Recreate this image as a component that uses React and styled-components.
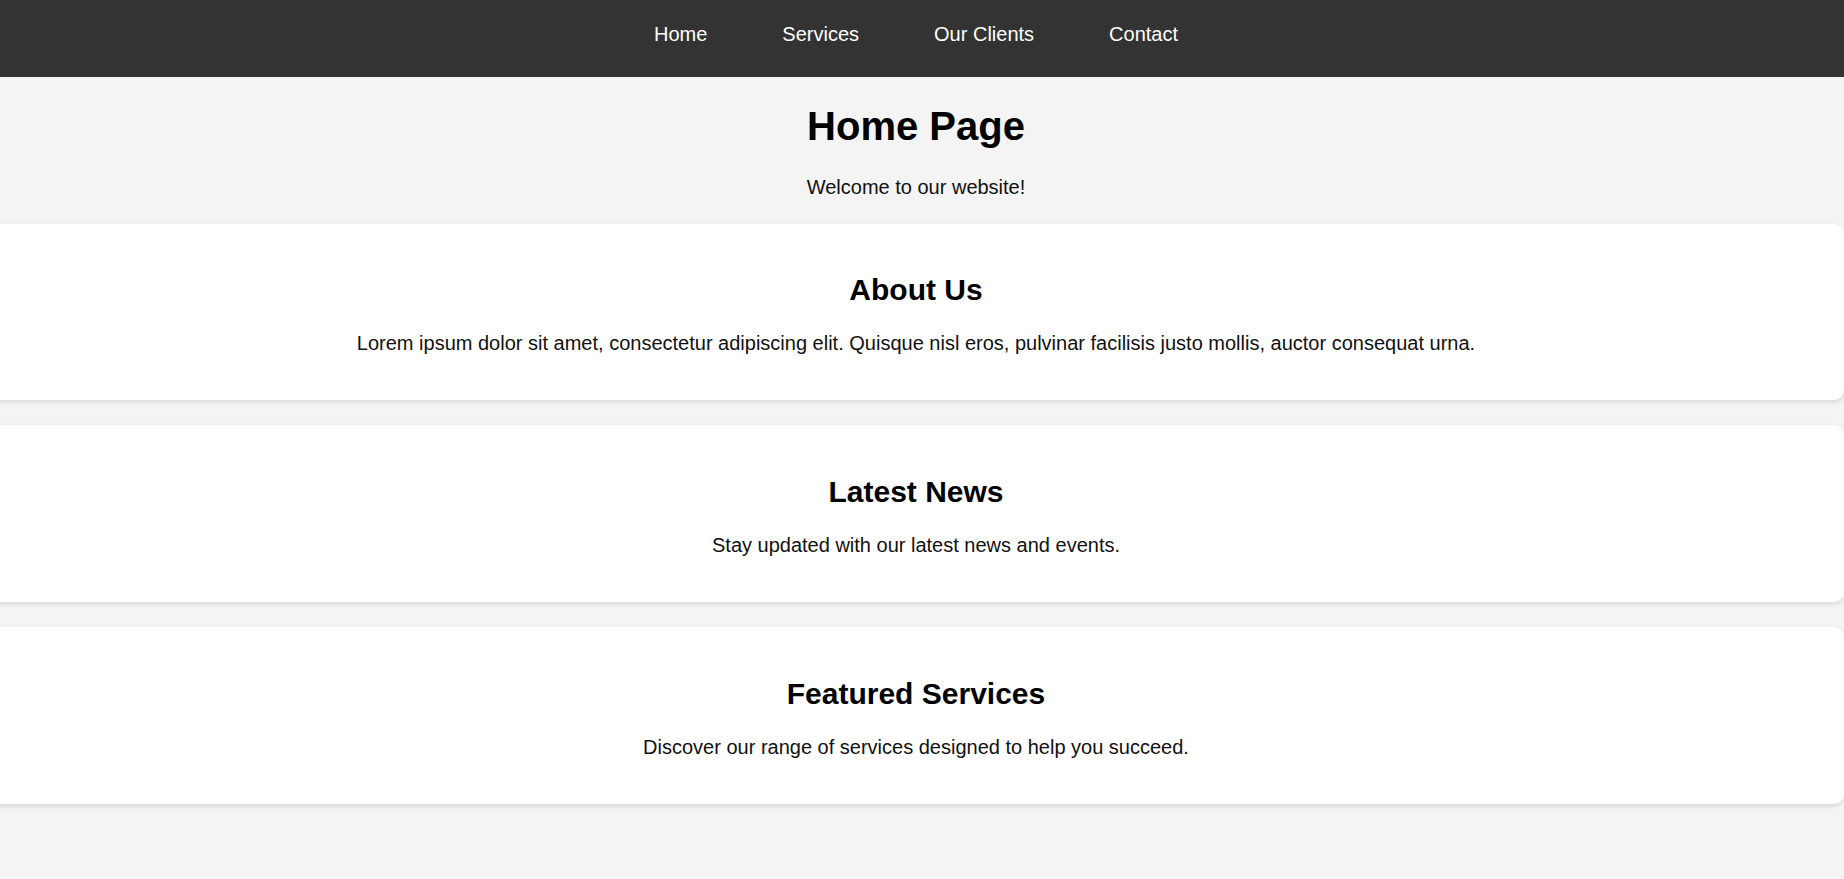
import React from "react";
import styled, { createGlobalStyle } from "styled-components";

const GlobalStyle = createGlobalStyle`
  html, body {
    margin: 0;
    padding: 0;
    background: #f4f4f4;
    overflow-x: hidden;
  }
  body {
    font-family: "Liberation Sans", Arial, sans-serif;
    font-size: 20px;
    color: #111;
  }
`;

const Page = styled.div`
  margin-left: -12px;
  width: calc(100% + 12px);
  background: #f4f4f4;
`;

const NavBar = styled.nav`
  box-sizing: border-box;
  background: #333333;
  height: 77px;
  padding-bottom: 8px;
  display: flex;
  align-items: center;
  justify-content: center;
`;

const NavList = styled.ul`
  list-style: none;
  margin: 0;
  padding: 0;
  display: flex;
  gap: 75px;
`;

const NavLink = styled.a`
  color: #ffffff;
  text-decoration: none;
  font-size: 20px;
  line-height: 23px;
  cursor: pointer;
`;

const Main = styled.main`
  display: flow-root;
  text-align: center;
`;

const Title = styled.h1`
  font-size: 40px;
  font-weight: bold;
  margin: 26.8px 0;
  color: #000;
`;

const Text = styled.p`
  font-size: 20px;
  margin: 20px 0;
  color: #111;
`;

const Card = styled.section`
  background: #ffffff;
  border-radius: 10px;
  box-shadow: 0 2px 5px rgba(0, 0, 0, 0.12);
  padding: 25px;
  margin: 25px 0;
  text-align: center;
`;

const CardTitle = styled.h2`
  font-size: 30px;
  font-weight: bold;
  margin: 24.9px 0;
  color: #000;
`;

const sections = [
  {
    title: "About Us",
    text: "Lorem ipsum dolor sit amet, consectetur adipiscing elit. Quisque nisl eros, pulvinar facilisis justo mollis, auctor consequat urna.",
  },
  { title: "Latest News", text: "Stay updated with our latest news and events." },
  {
    title: "Featured Services",
    text: "Discover our range of services designed to help you succeed.",
  },
];

const links = ["Home", "Services", "Our Clients", "Contact"];

export default function App() {
  return (
    <>
      <GlobalStyle />
      <Page>
        <NavBar>
          <NavList>
            {links.map((l) => (
              <li key={l}>
                <NavLink>{l}</NavLink>
              </li>
            ))}
          </NavList>
        </NavBar>
        <Main>
          <Title>Home Page</Title>
          <Text>Welcome to our website!</Text>
          {sections.map((s) => (
            <Card key={s.title}>
              <CardTitle>{s.title}</CardTitle>
              <Text>{s.text}</Text>
            </Card>
          ))}
        </Main>
      </Page>
    </>
  );
}
